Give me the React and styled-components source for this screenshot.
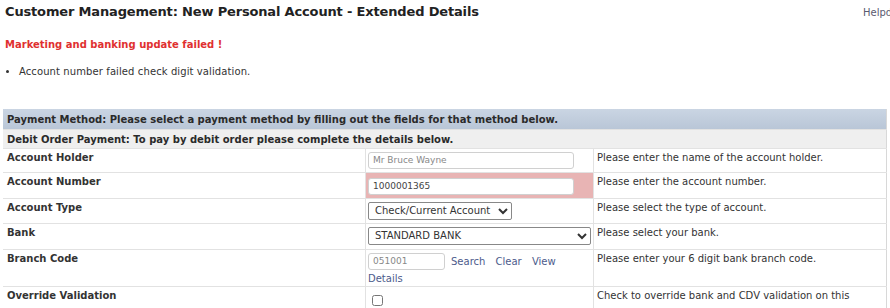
import styled, { createGlobalStyle } from "styled-components";

const GlobalStyle = createGlobalStyle`
  html, body {
    margin: 0;
    padding: 0;
    background: #fff;
  }
  body {
    font-family: "DejaVu Sans", Verdana, sans-serif;
    color: #333;
    font-size: 11px;
  }
`;

const Page = styled.div`
  width: 890px;
  height: 308px;
  overflow: hidden;
  padding: 4px 0 0 3px;
  box-sizing: border-box;
`;

const TitleBar = styled.div`
  display: flex;
  justify-content: space-between;
  align-items: baseline;
  padding-left: 2px;
  width: 885px;
`;

const Title = styled.h1`
  margin: 0;
  font-size: 13px;
  font-weight: bold;
  letter-spacing: -0.16px;
  color: #222;
`;

const HelpLink = styled.a`
  font-size: 10px;
  color: #5a5a70;
  text-decoration: none;
  white-space: nowrap;
  width: 27px;
`;

const ErrorTitle = styled.div`
  margin: 20px 0 0 2px;
  font-size: 10px;
  font-weight: bold;
  color: #e03030;
`;

const ErrorList = styled.ul`
  margin: 16px 0 0;
  padding-left: 16px;
  font-size: 10px;
  color: #333;
  li {
    letter-spacing: 0.1px;
  }
`;

const Table = styled.table`
  margin-top: 32px;
  width: 884px;
  border-collapse: collapse;
  font-size: 10px;
  border-right: 1px solid #d8d8d8;
  td {
    border-bottom: 1px solid #e2e2e2;
    vertical-align: top;
  }
`;

const Row = styled.tr`
  height: ${(p) => p.$h}px;
`;

const HeaderCell = styled.td`
  padding: 1px 4px 0;
  font-weight: bold;
  color: #2a2a2a;
  vertical-align: middle !important;
  background: ${(p) =>
    p.$variant === "main"
      ? "linear-gradient(#cad5e3, #b9c6d7)"
      : "#efefef"};
`;

const LabelCell = styled.td`
  width: 354px;
  padding: 3px 4px 0;
  font-weight: bold;
  color: #333;
`;

const FieldCell = styled.td`
  width: 220px;
  padding: 3px 2px 2px;
  border-left: 1px solid #e2e2e2;
  background: ${(p) => (p.$error ? "#e8b4b4" : "transparent")};
`;

const HelpCell = styled.td`
  padding: ${(p) => (p.$loose ? "0 3px" : "2px 3px 0")};
  line-height: ${(p) => (p.$loose ? 18 : 14)}px;
  border-left: 1px solid #e2e2e2;
  color: #333;
`;

const TextInput = styled.input`
  box-sizing: border-box;
  width: ${(p) => p.$width || 206}px;
  height: 17px;
  margin-top: ${(p) => p.$offset || 0}px;
  border: 1px solid #d0d0d0;
  border-radius: 3px;
  padding: 0 4px;
  font-family: "DejaVu Sans", Verdana, sans-serif;
  font-size: 9px;
  color: ${(p) => (p.$muted ? "#888" : "#444")};
  background: #fff;
  outline: none;
`;

const Select = styled.select`
  box-sizing: border-box;
  width: ${(p) => p.$width}px;
  height: 18px;
  border: 1px solid #888;
  border-radius: 2px;
  padding: 0 2px;
  font-family: "DejaVu Sans", Verdana, sans-serif;
  font-size: 10px;
  color: #333;
  background: #fff;
`;

const BranchRow = styled.div`
  display: flex;
  align-items: center;
  gap: 6px;
`;

const LinkText = styled.a`
  color: #4d5b8c;
  text-decoration: none;
  font-size: 10px;
  margin-right: 7px;
`;

const DetailsLink = styled(LinkText)`
  display: block;
  margin-top: 3px;
`;

const Checkbox = styled.input`
  margin: 5px 0 0 4px;
  width: 11px;
  height: 11px;
`;

export default function App() {
  return (
    <Page>
      <GlobalStyle />
      <TitleBar>
        <Title>Customer Management: New Personal Account - Extended Details</Title>
        <HelpLink>Helpdesk</HelpLink>
      </TitleBar>
      <ErrorTitle>Marketing and banking update failed !</ErrorTitle>
      <ErrorList>
        <li>Account number failed check digit validation.</li>
      </ErrorList>
      <Table>
        <tbody>
          <Row $h={20}>
            <HeaderCell colSpan={3} $variant="main">
              Payment Method: Please select a payment method by filling out the fields for that method below.
            </HeaderCell>
          </Row>
          <Row $h={19}>
            <HeaderCell colSpan={3}>
              Debit Order Payment: To pay by debit order please complete the details below.
            </HeaderCell>
          </Row>
          <Row $h={24}>
            <LabelCell>Account Holder</LabelCell>
            <FieldCell>
              <TextInput defaultValue="Mr Bruce Wayne" $muted />
            </FieldCell>
            <HelpCell>Please enter the name of the account holder.</HelpCell>
          </Row>
          <Row $h={26}>
            <LabelCell>Account Number</LabelCell>
            <FieldCell $error>
              <TextInput defaultValue="1000001365" $offset={2} />
            </FieldCell>
            <HelpCell>Please enter the account number.</HelpCell>
          </Row>
          <Row $h={25}>
            <LabelCell>Account Type</LabelCell>
            <FieldCell>
              <Select $width={144} defaultValue="cheque">
                <option value="cheque">Check/Current Account</option>
                <option value="savings">Savings Account</option>
              </Select>
            </FieldCell>
            <HelpCell>Please select the type of account.</HelpCell>
          </Row>
          <Row $h={26}>
            <LabelCell>Bank</LabelCell>
            <FieldCell>
              <Select $width={223} defaultValue="sb">
                <option value="sb">STANDARD BANK</option>
              </Select>
            </FieldCell>
            <HelpCell>Please select your bank.</HelpCell>
          </Row>
          <Row $h={35}>
            <LabelCell>Branch Code</LabelCell>
            <FieldCell>
              <BranchRow>
                <TextInput defaultValue="051001" $width={77} $muted />
                <span>
                  <LinkText>Search</LinkText> <LinkText>Clear</LinkText> <LinkText>View</LinkText>
                </span>
              </BranchRow>
              <DetailsLink>Details</DetailsLink>
            </FieldCell>
            <HelpCell>Please enter your 6 digit bank branch code.</HelpCell>
          </Row>
          <Row $h={30}>
            <LabelCell>Override Validation</LabelCell>
            <FieldCell>
              <Checkbox type="checkbox" />
            </FieldCell>
            <HelpCell $loose>Check to override bank and CDV validation on this account.</HelpCell>
          </Row>
        </tbody>
      </Table>
    </Page>
  );
}
